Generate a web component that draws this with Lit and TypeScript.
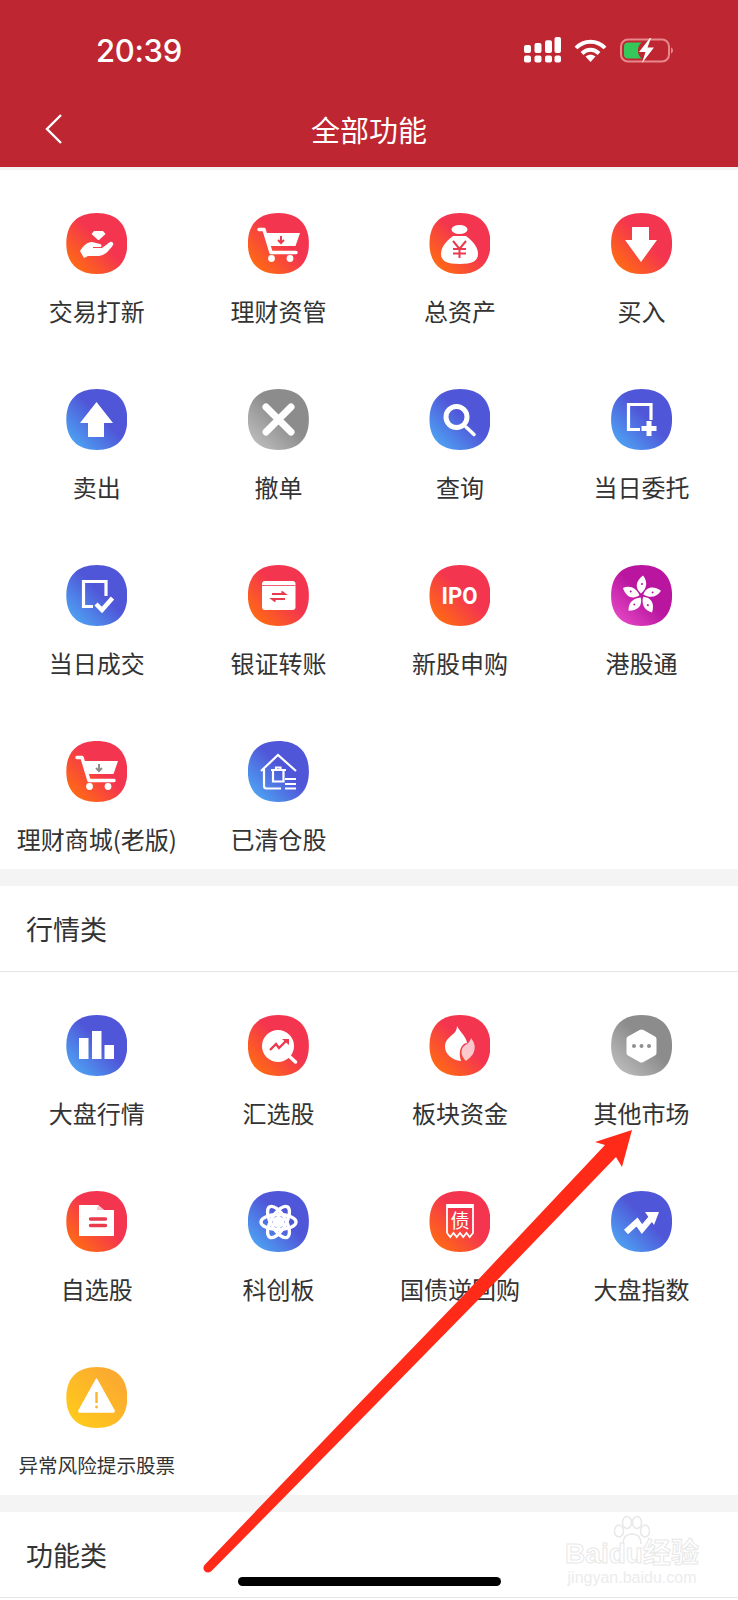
import {LitElement, html, css, svg} from 'lit';
import {customElement} from 'lit/decorators.js';

const RED = '#ea3a4e';

const cart = (arrow: string) => svg`
  <path d="M11 16.5h5l7 23h25" fill="none" stroke="#fff" stroke-width="3.5" stroke-linejoin="round" stroke-linecap="round"/>
  <path d="M18 20h34l-4.5 13H22z" fill="#fff"/>
  <path d="M33 23v7m-3-3l3 3 3-3" fill="none" stroke=${arrow} stroke-width="2"/>
  <circle cx="23.5" cy="45.5" r="3.4" fill="#fff"/>
  <circle cx="42" cy="45.5" r="3.4" fill="#fff"/>`;

const ICONS: Record<string, unknown> = {
  hand: svg`
    <path d="M28 18h9l2.5 3-6.5 6h-1l-6.500-6z" fill="#fff"/>
    <path d="M14 38c3-5 7-9 12-9l8 2c2 .5 2 3 0 3h-7v1h9l8-6c2-1 4 1 3 3-4 6-8 10-14 11H22l-4 2z" fill="#fff"/>`,
  cart: cart(RED),
  cartOld: cart('#8d8d8d'),
  bag: svg`
    <ellipse cx="30.500" cy="16.500" rx="8" ry="4.500" fill="#fff"/>
    <path d="M24 23c-8 6-12 12-12 18 0 7 6 10 18.500 10S49 48 49 41c0-6-4-12-12-18z" fill="#fff"/>
    <path d="M24 28l6.500 8 6.500-8M30.500 36v9M24 36h13M24 40.500h13" fill="none" stroke=${RED} stroke-width="2"/>`,
  down: svg`<path d="M21 14h17v13h8L30 49 14 27h7z" fill="#fff"/>`,
  up: svg`<path d="M30.500 13L47 34h-9v14H22V34h-8z" fill="#fff"/>`,
  cross: svg`<path d="M18 18l25 25M43 18L18 43" fill="none" stroke="#fff" stroke-width="7" stroke-linecap="round"/>`,
  search: svg`
    <circle cx="27.500" cy="28" r="10.500" fill="none" stroke="#fff" stroke-width="5"/>
    <path d="M37 38l8 7.500" stroke="#fff" stroke-width="3.500" stroke-linecap="round"/>`,
  docPlus: svg`
    <path d="M40 31V15.500H17.500v25H29" fill="none" stroke="#fff" stroke-width="3.200"/>
    <path d="M38 32v15M30.500 39.500h15" stroke="#fff" stroke-width="5"/>`,
  docCheck: svg`
    <path d="M40 31V16.500H17.500v25H27" fill="none" stroke="#fff" stroke-width="3.200"/>
    <path d="M30 39l6 6 10.500-12" fill="none" stroke="#fff" stroke-width="4.500"/>`,
  transfer: svg`
    <rect x="14" y="16" width="33.500" height="29" rx="3" fill="#fff"/>
    <path d="M14 20.500h33.500" stroke=${RED} stroke-width=".8"/>
    <path d="M24 29h13l-3.500-2.500M37 34H24l3.500 2.500" fill="none" stroke=${RED} stroke-width="1.800"/>`,
  ipo: svg`<text class="ipo" x="30.500" y="39" text-anchor="middle" textLength="36" lengthAdjust="spacingAndGlyphs">IPO</text>`,
  flower: svg`${[0, 72, 144, 216, 288].map(
    (deg) => svg`
      <g transform="rotate(${deg} 30.500 30.500)">
        <path d="M30 28.500c-6-5-6-12 2-18 5 6 4 13-2 18z" fill="#fff"/>
        <circle cx="31" cy="19" r="1" fill="#b9159f"/>
      </g>`
  )}`,
  house: svg`
    <path d="M13 30L30 14l18 16M16 28v17c0 1.500 1 2.500 2.500 2.500H33" fill="none" stroke="#fff" stroke-width="2.200"/>
    <path d="M23 29h15M25 29v11.500h10.500V29M28 29v-2.500h4.500V29" fill="none" stroke="#fff" stroke-width="2.200"/>
    <path d="M37 38h11M37 43h11M37 47.500h11" stroke="#fff" stroke-width="1.800"/>`,
  bars: svg`<path d="M13 23h9.500v21H13zM26 16h9.500v28H26zM38.500 30H48v14h-9.500z" fill="#fff"/>`,
  pick: svg`
    <circle cx="30" cy="31" r="16" fill="#fff"/>
    <path d="M41 41l6.500 6" stroke="#fff" stroke-width="3.500" stroke-linecap="round"/>
    <path d="M22 35l6-6 3 4 8-8" fill="none" stroke=${RED} stroke-width="2.400"/>
    <path d="M34 24h7v6z" fill=${RED}/>`,
  flame: svg`
    <path d="M42 23c4 5 5 10 2 16-2 3-5 5-7 7-4-4-6-9-3-14 3-3 7-4 8-9z" fill="#fff" opacity=".72"/>
    <path d="M28 11c3 6 9 10 10 17-3 0-6 3-7 8-.5 4 0 7 1 10-9-1-16-7-16-14 0-7 4-9 7-12 3-2 5-5 5-9z" fill="#fff"/>`,
  hex: svg`
    <path d="M28.500 15a4 4 0 0 1 4 0l11.500 6.500a3 3 0 0 1 1.500 2.500v14a3 3 0 0 1-1.500 2.500L32.500 47a4 4 0 0 1-4 0L17 40.500a3 3 0 0 1-1.500-2.500V24a3 3 0 0 1 1.500-2.500z" fill="#fff"/>
    <circle cx="23" cy="31" r="2" fill="#8f8f8f"/>
    <circle cx="30.500" cy="31" r="2" fill="#8f8f8f"/>
    <circle cx="38" cy="31" r="2" fill="#8f8f8f"/>`,
  folder: svg`
    <path d="M13 14h19l6 5h10v26H13z" fill="#fff"/>
    <path d="M32 14l6 5h-7z" fill="#f6c9cf"/>
    <path d="M24.500 28h15M24.500 34.500h15" stroke=${RED} stroke-width="3.400" stroke-linecap="round"/>`,
  atom: svg`
    <g fill="none" stroke="#fff" stroke-width="3.400">
      <ellipse cx="30.500" cy="31" rx="17.500" ry="7.500"/>
      <ellipse cx="30.500" cy="31" rx="17.500" ry="7.500" transform="rotate(60 30.500 31)"/>
      <ellipse cx="30.500" cy="31" rx="17.500" ry="7.500" transform="rotate(120 30.500 31)"/>
    </g>
    <path d="M30.500 24.500l6 3.300v6.500l-6 3.300-6-3.300v-6.500z" fill="#fff"/>`,
  bond: svg`
    <path d="M18 42V14h26v28l-3.300 4-3.200-4-3.300 4-3.200-4-3.300 4-3.200-4-3.300 4-3.200-4" fill="none" stroke="#fff" stroke-width="1.800"/>
    <path d="M18 14h26v3H18z" fill="#fff"/>
    <text class="bond" x="31" y="37" text-anchor="middle">债</text>`,
  trend: svg`
    <path d="M15 41l11-10 5 7 11-13" fill="none" stroke="#fff" stroke-width="6"/>
    <path d="M34 21h14l-5 13z" fill="#fff"/>`,
  warn: svg`
    <path d="M30.500 12L48 43.500a1 1 0 0 1-1 1.500H14a1 1 0 0 1-1-1.500z" fill="#fff" stroke="#fff" stroke-width="1.500" stroke-linejoin="round"/>
    <path d="M30.500 25v11" stroke="#f9b62a" stroke-width="2.400"/>
    <circle cx="30.500" cy="40" r="1.400" fill="#f9b62a"/>`,
};

interface Item {
  label: string;
  icon: string;
  tone: string;
  small?: boolean;
}

const TRADE: Item[] = [
  {label: '交易打新', icon: 'hand', tone: 'warm'},
  {label: '理财资管', icon: 'cart', tone: 'warm'},
  {label: '总资产', icon: 'bag', tone: 'warm'},
  {label: '买入', icon: 'down', tone: 'warm'},
  {label: '卖出', icon: 'up', tone: 'cool'},
  {label: '撤单', icon: 'cross', tone: 'grey'},
  {label: '查询', icon: 'search', tone: 'cool'},
  {label: '当日委托', icon: 'docPlus', tone: 'cool'},
  {label: '当日成交', icon: 'docCheck', tone: 'cool'},
  {label: '银证转账', icon: 'transfer', tone: 'warm'},
  {label: '新股申购', icon: 'ipo', tone: 'warm'},
  {label: '港股通', icon: 'flower', tone: 'violet'},
  {label: '理财商城(老版)', icon: 'cartOld', tone: 'warm'},
  {label: '已清仓股', icon: 'house', tone: 'cool'},
];

const MARKET: Item[] = [
  {label: '大盘行情', icon: 'bars', tone: 'cool'},
  {label: '汇选股', icon: 'pick', tone: 'warm'},
  {label: '板块资金', icon: 'flame', tone: 'warm'},
  {label: '其他市场', icon: 'hex', tone: 'grey'},
  {label: '自选股', icon: 'folder', tone: 'warm'},
  {label: '科创板', icon: 'atom', tone: 'cool'},
  {label: '国债逆回购', icon: 'bond', tone: 'warm'},
  {label: '大盘指数', icon: 'trend', tone: 'cool'},
  {label: '异常风险提示股票', icon: 'warn', tone: 'amber', small: true},
];

@customElement('app-root')
export class AppRoot extends LitElement {
  static override styles = css`
    :host {
      display: block;
      position: relative;
      width: 738px;
      height: 1600px;
      overflow: hidden;
      background: #fff;
      font-family: 'Noto Sans CJK SC', 'Liberation Sans', sans-serif;
      color: #333;
    }

    .head {
      background: #be2631;
      color: #fff;
      height: 167px;
      border-bottom: 3px solid #f4f3f3;
    }

    .status {
      display: flex;
      align-items: center;
      height: 100px;
      padding: 0 65px 0 96px;
    }

    .time {
      font-family: Inter, 'Liberation Sans', sans-serif;
      font-size: 31px;
      font-weight: 500;
      letter-spacing: -0.3px;
      flex: 1;
    }

    .status-icons {
      display: flex;
      align-items: center;
      gap: 13px;
    }

    .nav {
      display: grid;
      grid-template-columns: 1fr auto 1fr;
      align-items: center;
      height: 58px;
      padding: 0 45px 2px;
    }

    .nav svg {
      display: block;
    }

    .nav h1 {
      margin: 0;
      font-size: 29px;
      font-weight: 400;
      line-height: 40px;
    }

    .grid {
      display: grid;
      grid-template-columns: repeat(4, 181.6px);
      row-gap: 62px;
      padding: 43px 6px 14px;
    }

    .cell {
      display: flex;
      flex-direction: column;
      align-items: center;
      gap: 21px;
    }

    .tile {
      width: 61px;
      height: 61px;
      clip-path: path('M30.500 0C50 0 61 11 61 30.500C61 50 50 61 30.500 61C11 61 0 50 0 30.500C0 11 11 0 30.500 0Z');
    }

    .tile svg {
      display: block;
    }

    .warm {
      background: linear-gradient(45deg, #ff6a14 12%, #f4354f 56%);
    }

    .cool {
      background: linear-gradient(45deg, #4ea3f3 10%, #5056d8 56%);
    }

    .grey {
      background: linear-gradient(45deg, #bcbcbc 10%, #8c8c8c 56%);
    }

    .violet {
      background: linear-gradient(45deg, #e448c4 10%, #b9159f 52%);
    }

    .amber {
      background: linear-gradient(45deg, #ffc81c 15%, #fbab30 80%);
    }

    .label {
      font-size: 24px;
      line-height: 32px;
      white-space: nowrap;
    }

    .label.small {
      font-size: 19.6px;
    }

    .band {
      height: 17px;
      background: #f5f4f4;
    }

    .section {
      height: 85px;
      border-bottom: 1px solid #e6e6e6;
      display: flex;
      align-items: center;
      padding-left: 26px;
      font-size: 27px;
    }

    .ipo {
      font-family: Roboto, sans-serif;
      font-size: 24px;
      font-weight: 700;
      fill: #fff;
    }

    .bond {
      font-size: 19px;
      fill: #fff;
    }

    .overlay {
      position: absolute;
      left: 0;
      top: 0;
      pointer-events: none;
    }

    .home {
      position: absolute;
      left: 238px;
      top: 1577px;
      width: 263px;
      height: 9px;
      border-radius: 5px;
      background: #000;
    }

    .mark {
      position: absolute;
      left: 565px;
      top: 1516px;
      width: 134px;
      display: flex;
      flex-direction: column;
      align-items: center;
      color: #ececec;
      font-family: 'Liberation Sans', 'Noto Sans CJK SC', sans-serif;
    }

    .mark svg {
      display: block;
      margin-bottom: -6px;
    }

    .mark-name {
      font-size: 28px;
      line-height: 28px;
      font-weight: 700;
      white-space: nowrap;
      color: #fff;
      -webkit-text-stroke: 1px #e8e8e8;
    }

    .mark-url {
      font-size: 16px;
      line-height: 20px;
      white-space: nowrap;
    }
  `;

  private renderCell(item: Item) {
    return html`
      <div class="cell">
        <div class="tile ${item.tone}">
          <svg width="61" height="61" viewBox="0 0 61 61">${ICONS[item.icon]}</svg>
        </div>
        <div class="label ${item.small ? 'small' : ''}">${item.label}</div>
      </div>
    `;
  }

  override render() {
    return html`
      <div class="head">
        <div class="status">
          <div class="time">20:39</div>
          <div class="status-icons">
            <svg width="37" height="26" viewBox="0 0 37 26" fill="#fff">
              <rect x="0" y="8" width="7" height="8" rx="2"/>
              <rect x="10.500" y="6" width="7" height="10" rx="2"/>
              <rect x="21" y="3.300" width="7" height="12.700" rx="2"/>
              <rect x="30.500" y="0" width="6.500" height="16" rx="2"/>
              <rect x="0" y="18.500" width="7" height="7" rx="2"/>
              <rect x="10.500" y="18.500" width="7" height="7" rx="2"/>
              <rect x="21" y="18.500" width="7" height="7" rx="2"/>
              <rect x="30.500" y="18.500" width="6.500" height="7" rx="2"/>
            </svg>
            <svg width="33" height="24" viewBox="0 0 33 24">
              <path d="M2 10C10 1.500 23 1.500 31 10M8 15.500c5-5 12-5 17 0" fill="none" stroke="#fff" stroke-width="4"/>
              <path d="M11.500 18.500c3-2.300 7-2.300 10 0L16.500 24z" fill="#fff"/>
            </svg>
            <svg width="53" height="25" viewBox="0 0 53 25">
              <rect x="1" y="1.500" width="48" height="22" rx="7" fill="none" stroke="#e8878d" stroke-width="2"/>
              <path d="M51 9.500c1.500.5 2 2 2 3s-.5 2.500-2 3z" fill="#e8878d"/>
              <path d="M8 4.500h14a9 9 0 0 0-4 8 9 9 0 0 0 4 8H8a4 4 0 0 1-4-4v-8a4 4 0 0 1 4-4z" fill="#34c759"/>
              <path d="M30 0L19 14h6.500L22 25l12-15.500h-6.500L31 0z" fill="#fff"/>
            </svg>
          </div>
        </div>
        <div class="nav">
          <svg width="17" height="30" viewBox="0 0 17 30">
            <path d="M16 1L2 15l14 14" fill="none" stroke="#fff" stroke-width="2.400"/>
          </svg>
          <h1>全部功能</h1>
        </div>
      </div>

      <div class="grid">${TRADE.map((item) => this.renderCell(item))}</div>
      <div class="band"></div>
      <div class="section">行情类</div>
      <div class="grid">${MARKET.map((item) => this.renderCell(item))}</div>
      <div class="band"></div>
      <div class="section">功能类</div>

      <div class="mark">
        <svg width="42" height="30" viewBox="0 0 42 30" fill="none" stroke="#e8e8e8" stroke-width="1.500">
          <ellipse cx="8" cy="15" rx="4.500" ry="6"/>
          <ellipse cx="16" cy="6.500" rx="4.500" ry="6"/>
          <ellipse cx="26" cy="6.500" rx="4.500" ry="6"/>
          <ellipse cx="34" cy="15" rx="4.500" ry="6"/>
          <path d="M12 28c0-7 4-10 9-10s9 3 9 10"/>
        </svg>
        <div class="mark-name">Baidu经验</div>
        <div class="mark-url">jingyan.baidu.com</div>
      </div>

      <svg class="overlay" width="738" height="1600" viewBox="0 0 738 1600">
        <path d="M632 1130L595 1142l10 3L459 1300Q331 1432 204.500 1565a4.500 4.500 0 0 0 7 6Q344 1437 478 1300L616 1157l6 10z" fill="#ff2a17"/>
      </svg>
      <div class="home"></div>
    `;
  }
}

declare global {
  interface HTMLElementTagNameMap {
    'app-root': AppRoot;
  }
}
